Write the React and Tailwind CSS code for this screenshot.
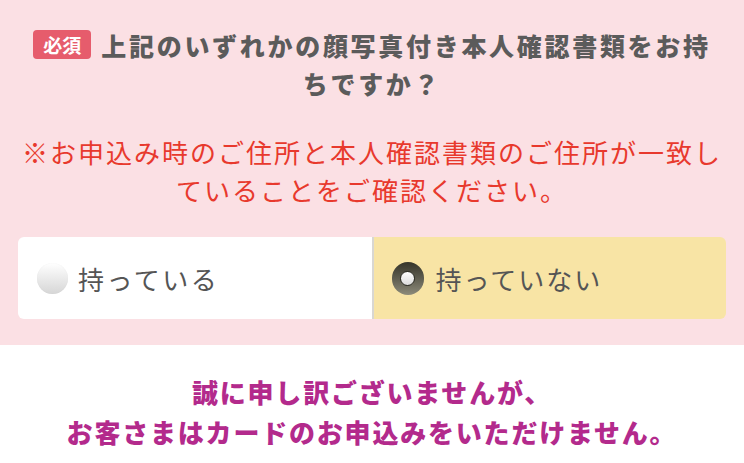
export default function App() {
  return (
    <div className="w-[744px] h-[463px] overflow-hidden bg-white font-['Noto_Sans_CJK_JP','Noto_Sans',sans-serif]">
      <div className="bg-[#fbe0e4] pt-[26px] pb-[26px] px-[18px]">
        <h2 className="text-center text-[25px] leading-[38px] font-extrabold text-[#5b5b5b] tracking-[2.7px] whitespace-nowrap">
          <span className="inline-block align-[3px] bg-[#e65c6c] text-white text-[19px] leading-[29px] px-[10px] rounded-[4px] mr-[10px] tracking-normal font-bold">
            必須
          </span>
          上記のいずれかの顔写真付き本人確認書類をお持
          <br />
          ちですか？
        </h2>
        <p className="mt-[31px] text-center text-[26px] leading-[38px] text-[#e8392d] tracking-[2px] whitespace-nowrap">
          ※お申込み時のご住所と本人確認書類のご住所が一致し
          <br />
          ていることをご確認ください。
        </p>
        <div className="mt-[28px] flex h-[82px] rounded-[6px] overflow-hidden">
          <div className="flex-1 bg-white flex items-center pl-[19px]">
            <span className="w-[31px] h-[31px] rounded-full bg-gradient-to-b from-[#ffffff] to-[#d6d6d6] shadow-[inset_0_0_1px_rgba(0,0,0,0.08)]" />
            <span className="ml-[10px] text-[26px] text-[#555555] tracking-[2.5px]">持っている</span>
          </div>
          <div className="w-[2px] bg-[#d9d7d2]" />
          <div className="flex-1 bg-[#f8e4a5] flex items-center pl-[18px]">
            <span className="w-[32px] h-[33px] rounded-full bg-gradient-to-b from-[#35342a] to-[#8d8b7a] flex items-center justify-center">
              <span className="w-[15px] h-[15px] rounded-full bg-gradient-to-b from-[#ffffff] to-[#dcdcdc] border border-[#2a2a22]" />
            </span>
            <span className="ml-[12px] text-[26px] text-[#555555] tracking-[2px]">持っていない</span>
          </div>
        </div>
      </div>
      <div className="bg-white text-center pt-[27px] text-[26px] leading-[40px] font-extrabold text-[#b32a8c] tracking-[1.8px] whitespace-nowrap">
        誠に申し訳ございませんが、
        <br />
        お客さまはカードのお申込みをいただけません。
      </div>
    </div>
  );
}
